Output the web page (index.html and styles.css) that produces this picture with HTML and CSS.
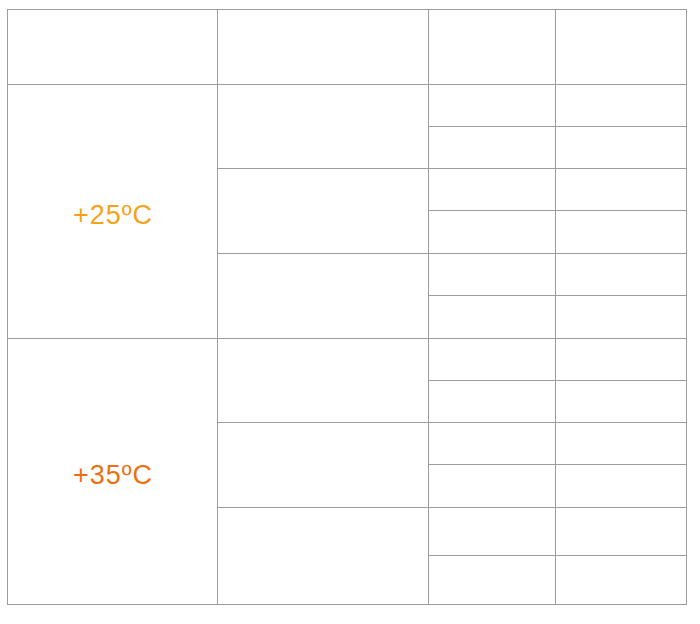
FILE: index.html
```html
<!DOCTYPE html>
<html>
<head>
  <meta charset="utf-8">
  <link rel="stylesheet" href="styles.css">
</head>
<body>
  <table class="grid">
    <colgroup>
      <col class="col-temp">
      <col class="col-group">
      <col class="col-a">
      <col class="col-b">
    </colgroup>
    <thead>
      <tr class="head-row">
        <th></th><th></th><th></th><th></th>
      </tr>
    </thead>
    <tbody>
      <tr>
        <td class="temp temp-25" rowspan="6">+25ºC</td>
        <td rowspan="2"></td><td></td><td></td>
      </tr>
      <tr><td></td><td></td></tr>
      <tr><td rowspan="2"></td><td></td><td></td></tr>
      <tr class="row-43"><td></td><td></td></tr>
      <tr><td rowspan="2"></td><td></td><td></td></tr>
      <tr class="row-43"><td></td><td></td></tr>

      <tr>
        <td class="temp temp-35" rowspan="6">+35ºC</td>
        <td rowspan="2"></td><td></td><td></td>
      </tr>
      <tr><td></td><td></td></tr>
      <tr><td rowspan="2"></td><td></td><td></td></tr>
      <tr class="row-43"><td></td><td></td></tr>
      <tr class="row-48"><td rowspan="2"></td><td></td><td></td></tr>
      <tr class="row-49"><td></td><td></td></tr>
    </tbody>
  </table>
</body>
</html>
```

FILE: styles.css
```css
body {
  margin: 0;
  padding: 9px 0 0 7px;
  background: #fff;
  font-family: 'Liberation Sans', Arial, sans-serif;
}

.grid {
  border-collapse: collapse;
  table-layout: fixed;
  width: 680px;
}

.grid th,
.grid td {
  border: 1px solid #9c9c9f;
  padding: 0;
  height: 41px;
}

.col-temp { width: 210px; }
.col-group { width: 211px; }
.col-a { width: 127px; }
.col-b { width: 131px; }

.head-row th {
  height: 74px;
}

.grid tr.row-43 td { height: 42px; }
.grid tr.row-48 td { height: 47px; }
.grid tr.row-49 td { height: 48px; }

.temp {
  text-align: center;
  vertical-align: middle;
  font-size: 27px;
  letter-spacing: 1px;
}

.grid td.temp {
  padding: 8px 0 0 1px;
}

.temp-25 { color: #f5a31a; }
.temp-35 { color: #ee6f12; }
```
